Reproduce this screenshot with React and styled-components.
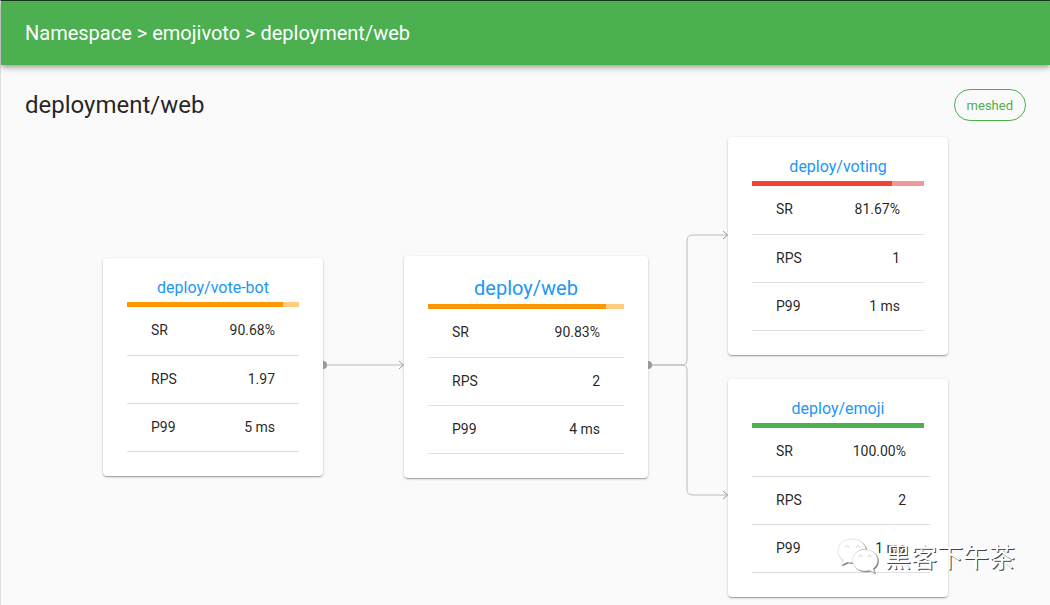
import styled, { createGlobalStyle } from "styled-components";

const inbound = { name: "deploy/vote-bot", status: "warning", sr: 90.68, rps: "1.97", p99: "5 ms" };
const current = { name: "deploy/web", status: "warning", sr: 90.83, rps: "2", p99: "4 ms" };
const outbound = [
    { name: "deploy/voting", status: "poor", sr: 81.67, rps: "1", p99: "1 ms" },
    { name: "deploy/emoji", status: "good", sr: 100, rps: "2", p99: "1 ms" },
];

const barColors = {
    good: ["#4caf50", "#a5d6a7"],
    warning: ["#ff9800", "#ffcc80"],
    poor: ["#f44336", "#ef9a9a"],
};

function ResourceCard({ resource, main }) {
    return (
        <Card $main={main}>
            <CardTitle $main={main}><a href="#resource">{resource.name}</a></CardTitle>
            <Bar $status={resource.status}>
                <BarFill $status={resource.status} style={{ width: `${resource.sr}%` }} />
            </Bar>
            <Metrics $wide={resource.sr === 100}>
                <tbody>
                    <tr><th scope="row">SR</th><td>{resource.sr.toFixed(2)}%</td></tr>
                    <tr><th scope="row">RPS</th><td>{resource.rps}</td></tr>
                    <tr><th scope="row">P99</th><td>{resource.p99}</td></tr>
                </tbody>
            </Metrics>
        </Card>
    );
}

function InboundArrow() {
    return (
        <Arrow width="81" height="460" viewBox="0 0 81 460" aria-hidden="true">
            <path className="line" d="M0 228H80" />
            <path className="dot" d="M0 224a4 4 0 0 1 0 8z" />
            <path className="head" d="M76 224L80.500 228L76 232" />
        </Arrow>
    );
}

function OutboundArrows() {
    return (
        <Arrow width="80" height="460" viewBox="0 0 80 460" aria-hidden="true">
            <path className="line" d="M0 228H34Q39 228 39 223V103Q39 98 45 98H79" />
            <path className="line" d="M0 228H34Q39 228 39 233V353Q39 358 45 358H79" />
            <path className="dot" d="M0 224a4 4 0 0 1 0 8z" />
            <path className="head" d="M75 94L79.500 98L75 102" />
            <path className="head" d="M75 354L79.500 358L75 362" />
        </Arrow>
    );
}

export default function App() {
    return (
        <Page>
            <GlobalStyle />
            <TopBar>Namespace &gt; emojivoto &gt; deployment/web</TopBar>
            <Content>
                <TitleRow>
                    <h1>deployment/web</h1>
                    <Chip>meshed</Chip>
                </TitleRow>
                <Octopus>
                    <ResourceCard resource={inbound} />
                    <InboundArrow />
                    <ResourceCard resource={current} main />
                    <OutboundArrows />
                    <Stack>
                        {outbound.map((r) => <ResourceCard key={r.name} resource={r} />)}
                    </Stack>
                </Octopus>
            </Content>
            <Watermark>
                <svg width="44" height="38" viewBox="0 0 44 38" aria-hidden="true">
                    <path d="M15 2C7 2 1 7 1 14c0 4 2 7 5 9.500L4.500 28l6-3c2 .6 4 .8 6 .6C15 18 21 12 29 12C28 6 22 2 15 2z" />
                    <path d="M28 12.500c-7 0-12.500 4.600-12.500 10.700S21 34 28 34c1.500 0 3-.2 4.500-.7L37.500 36l-1.300-4.500c2.700-2 4.300-5 4.300-8.300C40.500 17 35 12.500 28 12.500z" />
                    <path className="eyes" d="M8.500 10.500v-1q1.500-2 3 0v1M19.500 10.500v-1q1.500-2 3 0v1M22 20v-1q1.500-2 3 0v1M31 20v-1q1.500-2 3 0v1" />
                </svg>
                <span>黑客下午茶</span>
            </Watermark>
        </Page>
    );
}

const GlobalStyle = createGlobalStyle`
    * {
        box-sizing: border-box;
    }

    body {
        margin: 0;
        background: #fafafa;
        color: rgba(0, 0, 0, 0.87);
        font-family: Roboto, "Noto Sans CJK SC", sans-serif;
    }
`

const Page = styled.div`
    position: relative;
    min-height: 100vh;
    border-top: 1px solid #1b3a1d;
    border-left: 1px solid #e0e0e0;
`

const TopBar = styled.header`
    display: flex;
    align-items: center;
    height: 64px;
    padding: 0 24px;
    background: #4caf50;
    color: white;
    font-size: 20px;
    box-shadow: 0 2px 4px -1px rgba(0, 0, 0, 0.2), 0 4px 5px 0 rgba(0, 0, 0, 0.14), 0 1px 10px 0 rgba(0, 0, 0, 0.12);
`

const Content = styled.main`
    padding: 24px 24px 8px;
`

const TitleRow = styled.div`
    display: flex;
    align-items: center;
    justify-content: space-between;
    margin-bottom: 16px;

    h1 {
        margin: 0;
        font-size: 24px;
        font-weight: 400;
        line-height: 32px;
    }
`

const Chip = styled.span`
    height: 32px;
    padding: 0 12px;
    border: 1px solid #4caf50;
    border-radius: 16px;
    color: #4caf50;
    font-size: 13px;
    line-height: 31px;
`

const Octopus = styled.div`
    display: flex;
    align-items: center;
    justify-content: center;
`

const Stack = styled.div`
    display: flex;
    flex-direction: column;
    gap: 24px;
`

const Card = styled.section`
    flex: none;
    width: ${(props) => (props.$main ? "244px" : "220px")};
    padding: 24px;
    background: white;
    border-radius: 4px;
    box-shadow: 0 1px 3px 0 rgba(0, 0, 0, 0.2), 0 1px 1px 0 rgba(0, 0, 0, 0.14), 0 2px 1px -1px rgba(0, 0, 0, 0.12);
`

const CardTitle = styled.h2`
    margin: 0;
    padding-bottom: 8px;
    font-size: ${(props) => (props.$main ? "20px" : "16px")};
    line-height: ${(props) => (props.$main ? "16px" : "12px")};
    font-weight: 400;
    text-align: center;

    a {
        color: #2196f3;
        text-decoration: none;
    }
`

const Bar = styled.div`
    height: 5px;
    background: ${(props) => barColors[props.$status][1]};
`

const BarFill = styled.div`
    height: 100%;
    background: ${(props) => barColors[props.$status][0]};
`

const Metrics = styled.table`
    width: ${(props) => (props.$wide ? "calc(100% + 6px)" : "100%")};
    border-spacing: 0;
    font-size: 14px;

    th, td {
        height: 48px;
        padding: 0 0 2px 24px;
        border-bottom: 1px solid #e0e0e0;
        font-weight: 400;
        text-align: left;
        white-space: nowrap;
    }

    td {
        padding: 0 24px 2px 0;
        text-align: right;
    }

    tr:first-child > * {
        height: 49px;
    }
`

const Arrow = styled.svg`
    flex: none;

    path {
        fill: none;
    }

    .line {
        stroke: #bbb;
    }

    .head {
        stroke: #999;
    }

    .dot {
        fill: #999;
    }
`

// Sits over the lower right corner of the graph.
const Watermark = styled.div`
    position: absolute;
    right: 35px;
    bottom: 30px;
    display: flex;
    align-items: center;
    gap: 4px;
    color: white;
    font-family: "Noto Sans CJK SC", sans-serif;
    font-size: 26px;
    line-height: 38px;
    text-shadow: 1px 1px 0 #444;

    svg {
        overflow: visible;
        fill: white;
        stroke: #ccc;
        stroke-width: 0.5;
        filter: drop-shadow(1px 1px 0 #777);
    }

    .eyes {
        fill: none;
        stroke: #aaa;
    }
`
